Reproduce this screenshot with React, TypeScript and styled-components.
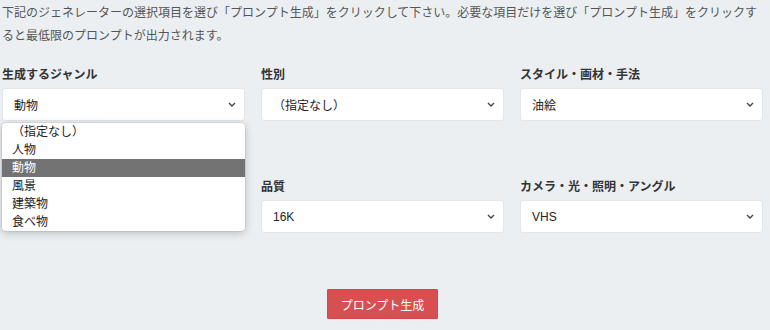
import React from 'react';
import styled, { createGlobalStyle } from 'styled-components';

const GlobalStyle = createGlobalStyle`
  body {
    margin: 0;
    background: #ebeff2;
    font-family: 'Liberation Sans', 'Noto Sans CJK JP', sans-serif;
    color: #333;
  }
`;

const Page = styled.div`
  width: 761px;
  padding: 2px 7px 0 2px;
`;

const Intro = styled.p`
  margin: 0;
  font-size: 12px;
  line-height: 23px;
  color: #555;
`;

const Grid = styled.div`
  display: grid;
  grid-template-columns: repeat(3, 1fr);
  column-gap: 16px;
  row-gap: 57px;
  margin-top: 18px;
`;

const Field = styled.div`
  position: relative;
  display: flex;
  flex-direction: column;
  gap: 4px;
`;

const Label = styled.div`
  font-size: 12px;
  font-weight: bold;
  line-height: 18px;
  color: #333;
`;

const SelectBox = styled.div`
  height: 33px;
  box-sizing: border-box;
  display: flex;
  align-items: center;
  justify-content: space-between;
  padding: 0 8px 0 11px;
  background: #fff;
  border: 1px solid #e3e6e9;
  border-radius: 3px;
  font-size: 12px;
  color: #222;
`;

const Menu = styled.ul`
  position: absolute;
  top: 57px;
  left: 0;
  right: 0;
  z-index: 2;
  margin: 0;
  padding: 0;
  list-style: none;
  background: #fff;
  border-radius: 4px;
  box-shadow: 0 2px 8px rgba(0, 0, 0, 0.22), 0 0 0 0.5px rgba(0, 0, 0, 0.12);
  overflow: hidden;
`;

const MenuItem = styled.li<{ selected?: boolean }>`
  height: 18px;
  line-height: 18px;
  padding-left: 10px;
  font-size: 12px;
  color: ${({ selected }) => (selected ? '#fff' : '#222')};
  background: ${({ selected }) => (selected ? '#737373' : 'transparent')};
`;

const Footer = styled.div`
  display: flex;
  justify-content: center;
  margin-top: 56px;
`;

const Button = styled.button`
  width: 111px;
  height: 30px;
  border: 1px solid #d9464a;
  border-radius: 1px;
  background: #d84f52;
  color: #fff;
  font-family: inherit;
  font-size: 12px;
  padding: 0;
`;

const Chevron = () => (
  <svg width="8" height="5" viewBox="0 0 8 5">
    <path d="M1 1 L4 4 L7 1" fill="none" stroke="#444" strokeWidth="1.4" />
  </svg>
);

const Select = ({ value }: { value: string }) => (
  <SelectBox>
    <span>{value}</span>
    <Chevron />
  </SelectBox>
);

const genres = ['（指定なし）', '人物', '動物', '風景', '建築物', '食べ物'];

const App = () => {
  return (
    <Page>
      <GlobalStyle />
      <Intro>
        下記のジェネレーターの選択項目を選び「プロンプト生成」をクリックして下さい。必要な項目だけを選び「プロンプト生成」をクリックすると最低限のプロンプトが出力されます。
      </Intro>
      <Grid>
        <Field>
          <Label>生成するジャンル</Label>
          <Select value="動物" />
          <Menu>
            {genres.map((g) => (
              <MenuItem key={g} selected={g === '動物'}>
                {g}
              </MenuItem>
            ))}
          </Menu>
        </Field>
        <Field>
          <Label>性別</Label>
          <Select value="（指定なし）" />
        </Field>
        <Field>
          <Label>スタイル・画材・手法</Label>
          <Select value="油絵" />
        </Field>
        <Field />
        <Field>
          <Label>品質</Label>
          <Select value="16K" />
        </Field>
        <Field>
          <Label>カメラ・光・照明・アングル</Label>
          <Select value="VHS" />
        </Field>
      </Grid>
      <Footer>
        <Button>プロンプト生成</Button>
      </Footer>
    </Page>
  );
};

export default App;
